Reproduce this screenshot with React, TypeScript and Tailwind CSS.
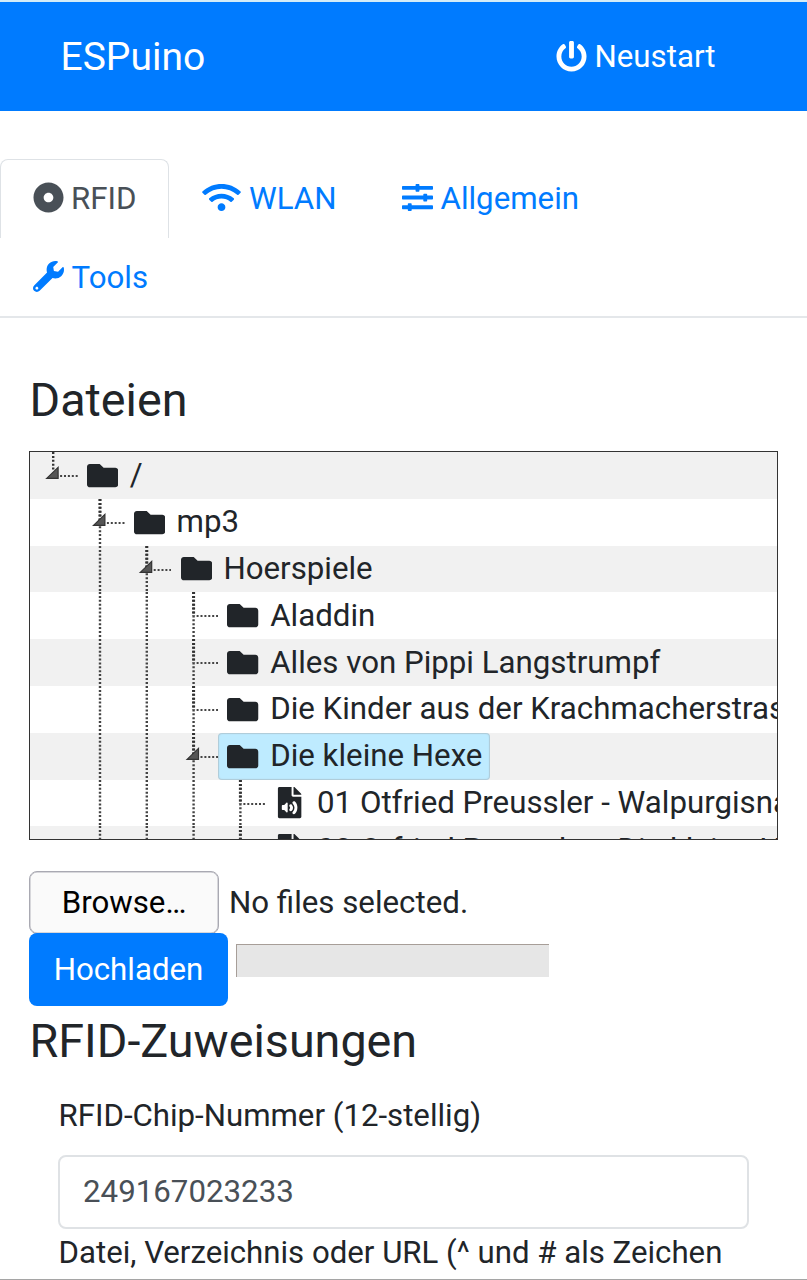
import { FaPowerOff, FaDotCircle, FaWifi, FaSlidersH, FaWrench, FaFolder, FaFileAudio } from "react-icons/fa";

type Row = {
  depth: number;
  label: string;
  kind?: "folder" | "audio";
  open?: boolean;
  selected?: boolean;
  guides: number[];
};

const rows: Row[] = [
  { depth: 0, label: "/", open: true, guides: [] },
  { depth: 1, label: "mp3", open: true, guides: [1] },
  { depth: 2, label: "Hoerspiele", open: true, guides: [1, 2] },
  { depth: 3, label: "Aladdin", guides: [1, 2, 3] },
  { depth: 3, label: "Alles von Pippi Langstrumpf", guides: [1, 2, 3] },
  { depth: 3, label: "Die Kinder aus der Krachmacherstrasse", guides: [1, 2, 3] },
  { depth: 3, label: "Die kleine Hexe", open: true, selected: true, guides: [1, 2, 3] },
  { depth: 4, label: "01 Otfried Preussler - Walpurgisnacht", kind: "audio", guides: [1, 2, 3, 4] },
  { depth: 4, label: "02 Otfried Preussler - Die kleine Hexe", kind: "audio", guides: [1, 2, 3, 4] },
];

const CELL = 46.8;

function Guides({ row }: { row: Row }) {
  const x = row.depth * CELL + 23.2;
  const w = (row.depth + 1) * CELL + 1;
  return (
    <svg className="h-full shrink-0" width={w} height={CELL} viewBox={`0 0 ${w} ${CELL}`} fill="none">
      {row.guides.map((g) => (
        <line key={g} x1={g * CELL + 23.2} x2={g * CELL + 23.2} y1="0" y2={CELL} stroke="#444" strokeWidth="2.4" strokeDasharray="2 1.9" />
      ))}
      <line x1={x} x2={x} y1="0" y2={row.depth === 0 ? 18 : 24} stroke="#333" strokeWidth={row.depth === 0 ? 2.4 : 3} strokeDasharray="2 1.9" />
      <line x1={x + 3} x2={x + 25} y1="24" y2="24" stroke="#444" strokeWidth="2" strokeDasharray="2 1.9" />
      {row.open && <path d={`M${x - 6.5} 26.4L${x + 4.9} 15.4V26.4Z`} fill="#555" stroke="#333" strokeWidth="1.2" />}
    </svg>
  );
}

function TreeRow({ row }: { row: Row }) {
  return (
    <div className="flex h-[46.8px] items-stretch whitespace-nowrap odd:bg-[#f1f1f1]">
      <Guides row={row} />
      <div
        className={
          row.selected
            ? "flex items-center rounded-[4px] bg-[#beebff] pr-2 shadow-[inset_0_0_1px_1px_#99999966]"
            : "flex items-center pr-2"
        }
      >
        <span className="flex w-[48px] shrink-0 justify-center pl-[1.5px]">
          {row.kind === "audio" ? <FaFileAudio className="size-[31.25px]" /> : <FaFolder className="size-[31.25px]" />}
        </span>
        <span className="pt-[0.8px] pl-[4px]">{row.label}</span>
      </div>
    </div>
  );
}

export default function App() {
  return (
    <div className="h-[1280px] overflow-hidden border-b border-[#a5a5a5] bg-white font-['Roboto',sans-serif] text-[31.25px] leading-[46.875px] text-[#212529]">
      <nav className="flex h-[111px] items-center justify-between border-t-2 border-[#d3ecf8] bg-[#007bff] pt-[2px] pr-[91.5px] pl-[60.5px] text-white">
        <span className="text-[39px]">ESPuino</span>
        <a className="flex items-center gap-[7.5px]">
          <FaPowerOff className="mb-[3px] size-[31px]" />
          Neustart
        </a>
      </nav>

      <div className="mt-[48px] flex flex-wrap border-b-2 border-[#e4e7ea] text-[#007bff]">
        <a className="flex h-[79px] w-[169px] items-center gap-[7.5px] rounded-t-[8px] border border-b-0 border-[#dee2e6] pl-[31.5px] text-[#495057]">
          <FaDotCircle className="mb-[3px] size-[31px]" />
          RFID
        </a>
        <a className="ml-px flex h-[79px] w-[199px] items-center gap-[8px] pt-px pl-[32px]">
          <FaWifi className="mb-[3px] h-[31px] w-[39px]" />
          WLAN
        </a>
        <a className="flex h-[79px] w-[240px] items-center gap-[8px] pt-px pl-[32.5px]">
          <FaSlidersH className="mb-[3px] size-[31px]" />
          Allgemein
        </a>
        <a className="flex h-[78px] w-full items-center gap-[8px] pt-[2px] pl-[32.5px]">
          <FaWrench className="mb-[3px] size-[31px]" />
          Tools
        </a>
      </div>

      <main className="px-[29px]">
        <h2 className="mt-[54px] pl-[0.5px] text-[46.7px] leading-[56px]">Dateien</h2>
        <div className="mt-[23px] h-[389px] w-[749px] overflow-hidden border border-[#333]">
          {rows.map((row) => (
            <TreeRow key={row.label} row={row} />
          ))}
        </div>

        <div className="mt-[31px] flex items-center gap-[10px]">
          <button className="h-[63px] w-[190px] rounded-[8px] border-[1.5px] border-[#a9a9b2] bg-[#fafafa] pt-[2px] text-black shadow-[inset_0_0_0_0.5px_#b4b4bc]">Browse…</button>
          <span className="pt-[2px]">No files selected.</span>
        </div>
        <div className="-mt-px flex items-start gap-[8px]">
          <button className="h-[73px] w-[199px] rounded-[8px] bg-[#007bff] pt-[2px] text-white">Hochladen</button>
          <div className="mt-[11px] h-[33px] w-[313px] border-t border-l border-[#a79e98] bg-[#e6e6e6]" />
        </div>

        <h2 className="mt-[7px] pl-[0.5px] text-[46.7px] leading-[56px]">RFID-Zuweisungen</h2>
        <form className="mt-[24px] px-[29px]">
          <label className="block pl-[0.5px] text-[31.2px]">RFID-Chip-Nummer (12-stellig)</label>
          <div className="mt-[15px] flex h-[74px] w-[691px] items-center rounded-[8px] border-2 border-[#dfe2e5] pt-[2px] pl-[23px] text-[#495057]">249167023233</div>
          <label className="mt-px block pl-[0.5px] text-[31.2px] whitespace-nowrap">Datei, Verzeichnis oder URL (^ und # als Zeichen</label>
        </form>
      </main>
    </div>
  );
}
